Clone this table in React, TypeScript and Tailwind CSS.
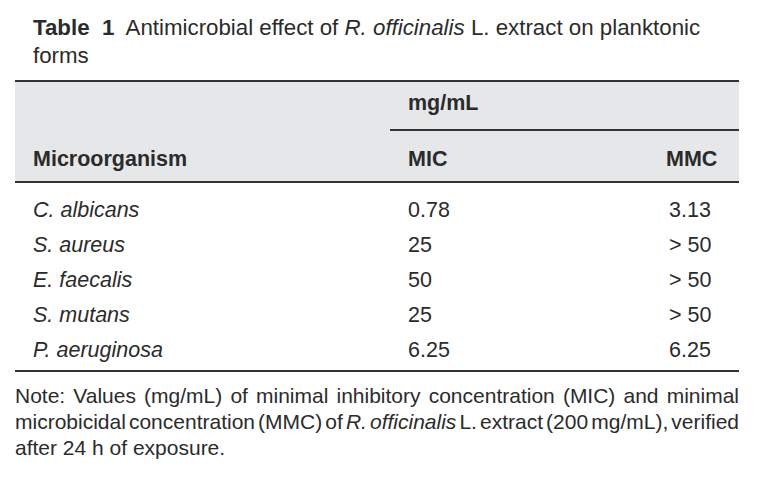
import React from "react";

const rows = [
  { name: "C. albicans", mic: "0.78", mmc: "3.13" },
  { name: "S. aureus", mic: "25", mmc: "> 50" },
  { name: "E. faecalis", mic: "50", mmc: "> 50" },
  { name: "S. mutans", mic: "25", mmc: "> 50" },
  { name: "P. aeruginosa", mic: "6.25", mmc: "6.25" },
];

export default function App() {
  return (
    <div
      className="w-[759px] h-[479px] bg-white text-[#2b2b2b] overflow-hidden"
      style={{ fontFamily: '"Liberation Sans", Arial, Helvetica, sans-serif' }}
    >
      {/* Title */}
      <div className="pl-[33px] pt-[14px] text-[22.3px] leading-[28px]">
        <span className="font-bold">Table&nbsp; 1</span>&nbsp; Antimicrobial effect of{" "}
        <i>R. officinalis</i> L. extract on planktonic
        <br />
        forms
      </div>

      {/* Table */}
      <div className="mx-[15px] mt-[10px] w-[724px]">
        {/* Header */}
        <div className="flex border-t-2 border-b-2 border-[#333] bg-[#e6e7e8] text-[21.5px] leading-[24px] font-bold">
          <div className="w-[375px] flex items-end pl-[18px] pb-[10px]">Microorganism</div>
          <div className="flex-1 flex flex-col">
            <div className="pl-[18px] pt-[9px] pb-[14px] border-b-2 border-[#333]">mg/mL</div>
            <div className="flex pt-[16px] pb-[10px]">
              <div className="w-[261px] pl-[18px]">MIC</div>
              <div className="flex-1 pl-[15px]">MMC</div>
            </div>
          </div>
        </div>

        {/* Body */}
        <div className="pt-[9px] pb-[3px] border-b-2 border-[#333] text-[21.5px]">
          {rows.map((r) => (
            <div key={r.name} className="flex h-[35px] items-center leading-[24px]">
              <div className="w-[375px] pl-[18px] italic">{r.name}</div>
              <div className="w-[261px] pl-[18px]">{r.mic}</div>
              <div className="flex-1 pl-[18px]">{r.mmc}</div>
            </div>
          ))}
        </div>

        {/* Note */}
        <div className="mt-[11px] text-[21px] leading-[26px]">
          <div className="text-justify [text-align-last:justify] whitespace-nowrap">
            Note: Values (mg/mL) of minimal inhibitory concentration (MIC) and minimal
          </div>
          <div className="text-justify [text-align-last:justify] whitespace-nowrap [word-spacing:-3.4px]">
            microbicidal concentration (MMC) of <i>R. officinalis</i> L. extract (200 mg/mL), verified
          </div>
          <div>after 24 h of exposure.</div>
        </div>
      </div>
    </div>
  );
}
